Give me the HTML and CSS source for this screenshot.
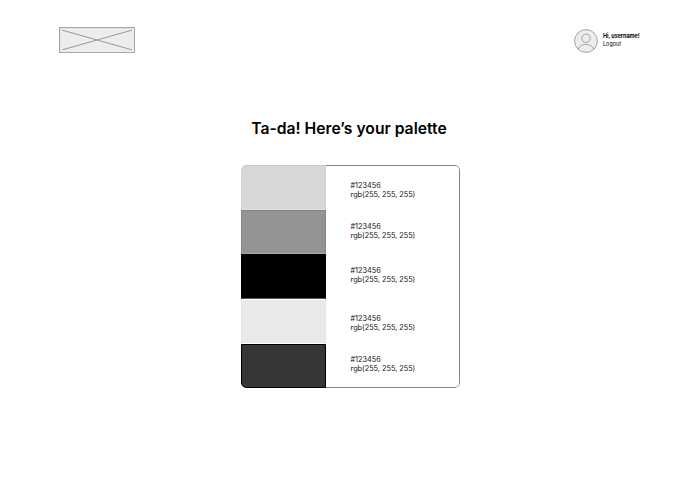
FILE: index.html
```html
<!DOCTYPE html>
<html lang="en">
<head>
<meta charset="utf-8">
<title>Your palette</title>
<link rel="stylesheet" href="styles.css">
</head>
<body>
<header class="header">
  <svg class="logo" width="76" height="26" viewBox="0 0 76 26">
    <rect x=".6" y=".6" width="75" height="25" fill="#ededed" stroke="#a3a3a3" stroke-width="1.1"/>
    <path d="M3.3 3.2 72.8 22.8M72.8 3.2 3.3 22.8" stroke="#999" stroke-width="1"/>
  </svg>
  <div class="user">
    <svg class="avatar" width="24" height="24" viewBox="0 0 24 24" fill="none" stroke="#a3a3a3">
      <circle cx="12" cy="12" r="11.4" fill="#ededed"/>
      <circle cx="12" cy="9.3" r="4.1"/>
      <path d="M4 20.1C5.7 17 8.6 15.3 12 15.3s6.300 1.700 8 4.800"/>
    </svg>
    <div class="account">
      <strong>Hi, username!</strong>
      <span>Logout</span>
    </div>
  </div>
</header>
<main class="main">
  <h1 class="title">Ta-da! Here’s your palette</h1>
  <section class="palette">
    <div class="swatches">
      <div class="swatch silver"></div>
      <div class="swatch gray"></div>
      <div class="swatch black"></div>
      <div class="swatch light"></div>
      <div class="swatch dark"></div>
    </div>
    <div class="codes">
      <p>#123456<br>rgb(255, 255, 255)</p>
      <p>#123456<br>rgb(255, 255, 255)</p>
      <p>#123456<br>rgb(255, 255, 255)</p>
      <p>#123456<br>rgb(255, 255, 255)</p>
      <p>#123456<br>rgb(255, 255, 255)</p>
    </div>
  </section>
</main>
</body>
</html>
```
FILE: styles.css
```css
* { box-sizing: border-box; }
body {
  margin: 0;
  background: #fff;
  color: #000;
  font-family: Inter, sans-serif;
}
.header {
  display: flex;
  justify-content: space-between;
  align-items: flex-start;
  padding: 27px 60.500px 0 59px;
  height: 54px;
}
.logo, .avatar { display: block; flex: none; }
.user { display: flex; gap: 5px; padding-top: 1px; }
.avatar { margin-top: .5px; }
.account {
  display: flex;
  flex-direction: column;
  width: 36.500px;
  padding-top: 4px;
  font-size: 5.500px;
  line-height: 8px;
  white-space: nowrap;
}
.account strong { font-weight: 700; letter-spacing: -.07px; }
.main { display: flex; flex-direction: column; align-items: center; }
.title {
  margin: 65px 1px 0 0;
  font-size: 15.700px;
  line-height: 20px;
  font-weight: 600;
  padding-right: 1px;
}
.palette {
  display: flex;
  width: 219px;
  height: 223px;
  margin: 26px 0 0 1px;
  border-radius: 5px;
  overflow: hidden;
}
.swatches {
  display: grid;
  grid-template-rows: 45px 44px 45px 45px 44px;
  width: 85px;
}
.swatch { border: 1px solid; }
.silver { background: #d7d7d7; border-color: #c8c8c8 #d2d2d2 #e2e2e2; border-top-left-radius: 5px; }
.gray { background: #949494; border-color: #858585 #858585 #aaa; }
.black { background: #000; border-color: #000 #000 #555; }
.light { background: #e9e9e9; border-color: #fff #e4e4e4 #fff; }
.dark { background: #363636; border-color: #000; border-bottom-left-radius: 5px; }
.codes {
  flex: 1;
  padding: 15px 0 0 24.500px;
  border: 1px solid #858585;
  border-left: 0;
  border-radius: 0 5px 5px 0;
  font-size: 7.300px;
  line-height: 9px;
  color: #111;
}
.codes p { margin: 0 0 23px; }
.codes p:nth-child(2) { margin-bottom: 26px; }
.codes p:nth-child(3) { margin-bottom: 30px; }
```
